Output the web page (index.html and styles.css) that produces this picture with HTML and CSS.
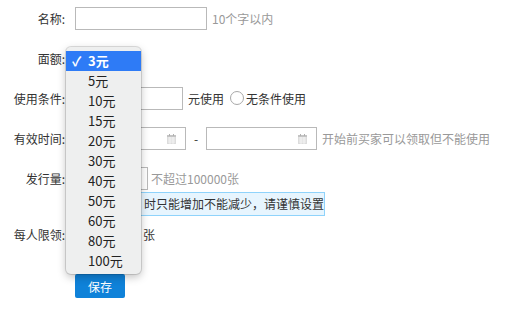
FILE: index.html
```html
<!DOCTYPE html>
<html lang="zh">
<head>
  <meta charset="UTF-8">
  <title>优惠券</title>
  <link rel="stylesheet" href="styles.css">
</head>
<body>

<div class="formulario">

  <!-- nombre -->
  <div class="fila">
    <span class="etiqueta">名称:</span>
    <input class="campo campo-nombre" type="text">
    <span class="pista">10个字以内</span>
  </div>

  <!-- valor (tapado por el menu) -->
  <div class="fila">
    <span class="etiqueta">面额:</span>
    <div class="selector"></div>
  </div>

  <!-- condicion -->
  <div class="fila">
    <span class="etiqueta">使用条件:</span>
    <input class="campo campo-condicion" type="text">
    <span class="texto">元使用</span>
    <span class="radio"></span>
    <span class="texto texto-radio">无条件使用</span>
  </div>

  <!-- fechas -->
  <div class="fila">
    <span class="etiqueta">有效时间:</span>
    <div class="campo campo-fecha">
      <svg class="calendario" viewBox="0 0 9 10">
        <rect x="0" y="1" width="9" height="9" fill="#dcdcdc"/>
        <rect x="0" y="1" width="9" height="2" fill="#c4c4c4"/>
        <rect x="2" y="0" width="1" height="2" fill="#b0b0b0"/>
        <rect x="6" y="0" width="1" height="2" fill="#b0b0b0"/>
        <path d="M1 4h7M1 6h7M1 8h7M3 3v7M6 3v7" stroke="#fff" stroke-width="0.6"/>
      </svg>
    </div>
    <span class="guion">-</span>
    <div class="campo campo-fecha">
      <svg class="calendario" viewBox="0 0 9 10">
        <rect x="0" y="1" width="9" height="9" fill="#dcdcdc"/>
        <rect x="0" y="1" width="9" height="2" fill="#c4c4c4"/>
        <rect x="2" y="0" width="1" height="2" fill="#b0b0b0"/>
        <rect x="6" y="0" width="1" height="2" fill="#b0b0b0"/>
        <path d="M1 4h7M1 6h7M1 8h7M3 3v7M6 3v7" stroke="#fff" stroke-width="0.6"/>
      </svg>
    </div>
    <span class="pista">开始前买家可以领取但不能使用</span>
  </div>

  <!-- cantidad -->
  <div class="fila">
    <span class="etiqueta">发行量:</span>
    <input class="campo campo-cantidad" type="text">
    <span class="pista pista-cantidad">不超过100000张</span>
  </div>

  <div class="aviso"><span class="aviso-texto">时只能增加不能减少，请谨慎设置</span></div>

  <!-- limite -->
  <div class="fila fila-limite">
    <span class="etiqueta">每人限领:</span>
    <div class="selector selector-limite"></div>
    <span class="texto">张</span>
  </div>

  <div class="acciones">
    <button class="boton">保存</button>
  </div>

  <!-- menu desplegable abierto -->
  <ul class="menu">
    <li class="activo"><span class="check">✓</span>3元</li>
    <li>5元</li>
    <li>10元</li>
    <li>15元</li>
    <li>20元</li>
    <li>30元</li>
    <li>40元</li>
    <li>50元</li>
    <li>60元</li>
    <li>80元</li>
    <li>100元</li>
  </ul>

</div>

</body>
</html>
```

FILE: styles.css
```css
body {
  margin: 0;
  background-color: #fff;
  font-family: "Noto Sans CJK SC", "Noto Sans", sans-serif;
  font-size: 12px;
  color: #333;
}

.formulario {
  position: relative;
  padding-top: 6px;
}

.fila {
  display: flex;
  align-items: center;
  height: 24px;
  margin-bottom: 16px;
}

.etiqueta {
  width: 65px;
  text-align: right;
  margin-right: 10px;
  color: #333;
}

.campo {
  box-sizing: border-box;
  height: 23px;
  border: 1px solid #b9b9b9;
  background-color: #fff;
  padding: 0 5px;
  font: inherit;
  outline: none;
}

.campo-nombre {
  width: 132px;
}

.campo-condicion {
  width: 108px;
}

.campo-fecha {
  position: relative;
  width: 111px;
}

.campo-cantidad {
  width: 73px;
}

.calendario {
  position: absolute;
  right: 9px;
  top: 6px;
  width: 9px;
  height: 10px;
}

.pista {
  margin-left: 5px;
  color: #999;
}

.pista-cantidad {
  margin-left: 3px;
}

.texto {
  margin-left: 5px;
}

.radio {
  box-sizing: border-box;
  width: 14px;
  height: 14px;
  border: 1px solid #a8a8a8;
  border-radius: 50%;
  margin-left: 6px;
  background-color: #fff;
}

.texto-radio {
  margin-left: 2px;
}

.guion {
  width: 20px;
  text-align: center;
}

.selector {
  box-sizing: border-box;
  width: 64px;
  height: 22px;
  border: 1px solid #b9b9b9;
  border-radius: 3px;
}

.aviso {
  box-sizing: border-box;
  width: 250px;
  height: 24px;
  margin: -14px 0 0 75px;
  padding: 0 0 0 68px;
  line-height: 22px;
  background-color: #e7f5fe;
  border: 1px solid #8fd3fb;
  color: #333;
  white-space: nowrap;
}

.fila-limite {
  margin-top: 6px;
  margin-bottom: 28px;
}

.selector-limite {
  width: 63px;
}

.acciones {
  padding-left: 75px;
}

.boton {
  width: 50px;
  height: 24px;
  border: none;
  border-radius: 2px;
  background-color: #0f82d9;
  color: #fff;
  font: inherit;
  font-size: 12px;
}

.menu {
  position: absolute;
  top: 47px;
  left: 66px;
  width: 75px;
  height: 227px;
  box-sizing: border-box;
  margin: 0;
  padding: 4px 0 0;
  list-style: none;
  background-color: #eeefef;
  border-radius: 5px;
  box-shadow: 0 0 0 1px rgba(0, 0, 0, 0.12), 0 3px 8px rgba(0, 0, 0, 0.25);
  font-size: 13px;
}

.menu li {
  position: relative;
  height: 20px;
  line-height: 20px;
  padding-left: 22px;
  color: #222;
}

.menu li.activo {
  background-color: #2e7bf6;
  color: #fff;
  font-weight: bold;
}

.check {
  position: absolute;
  left: 6px;
  top: 0;
}
```
